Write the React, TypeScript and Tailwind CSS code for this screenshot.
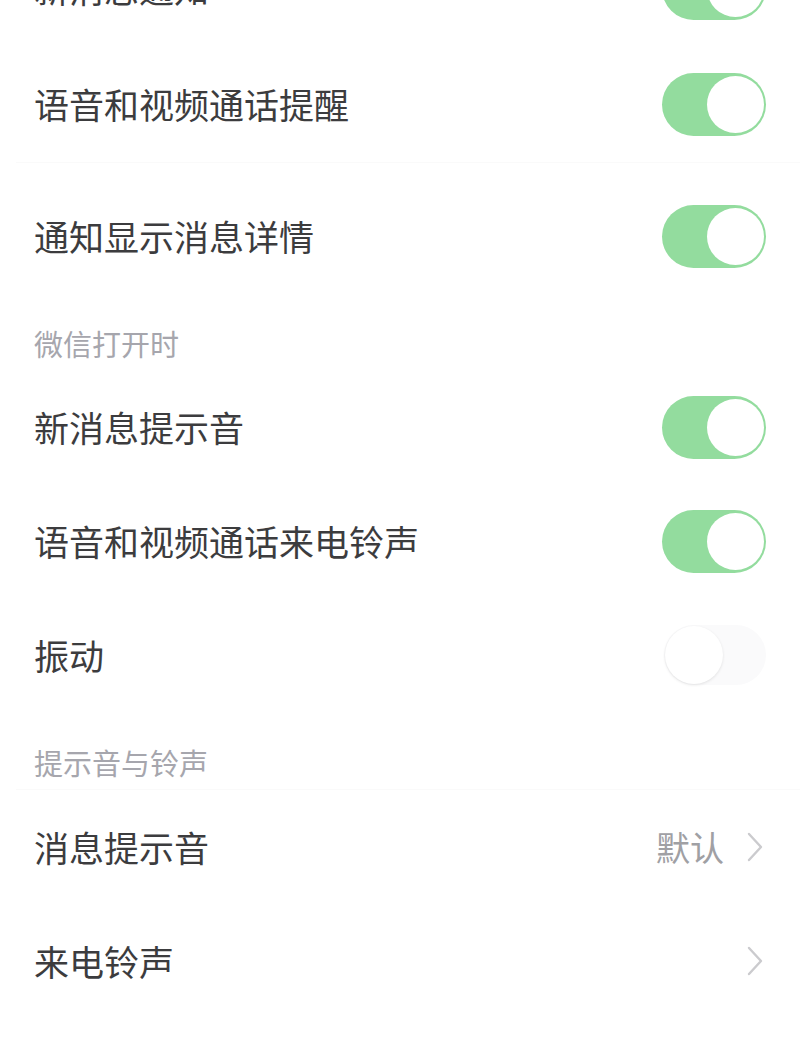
import React from "react";

const font = { fontFamily: '"Noto Sans CJK SC", "Noto Sans", sans-serif' };

function Toggle({ on }: { on: boolean }) {
  if (on) {
    return (
      <div className="relative h-[63px] w-[104px] rounded-full bg-[#93dc9e]">
        <div className="absolute right-[2px] top-[3px] h-[57px] w-[57px] rounded-full bg-white" />
      </div>
    );
  }
  return (
    <div className="relative h-[60px] w-[102px] rounded-full bg-[#fafafb]">
      <div className="absolute left-[1px] top-[1px] h-[58px] w-[58px] rounded-full bg-white shadow-[0_1px_3px_rgba(0,0,0,0.10)]" />
    </div>
  );
}

function Chevron() {
  return (
    <svg width="18" height="30" viewBox="0 0 18 30" fill="none">
      <path d="M3 2 L15 15 L3 28" stroke="#cbcbce" strokeWidth="2.4" strokeLinecap="round" strokeLinejoin="round" />
    </svg>
  );
}

function Row({ label, on, h = "h-[114px]" }: { label: string; on: boolean; h?: string }) {
  return (
    <div className={`flex ${h} items-center justify-between pl-[34px] pr-[34px]`}>
      <span className="text-[35px] leading-[40px] text-[#3c3c3e]">{label}</span>
      <Toggle on={on} />
    </div>
  );
}

function NavRow({ label, value }: { label: string; value?: string }) {
  return (
    <div className="flex h-[114px] items-center justify-between pl-[34px] pr-[36px]">
      <span className="text-[35px] leading-[40px] text-[#3c3c3e]">{label}</span>
      <div className="flex items-center gap-[22px]">
        {value && <span className="text-[34px] leading-[40px] text-[#a0a0a4]">{value}</span>}
        <Chevron />
      </div>
    </div>
  );
}

function Header({ label, pt, pb }: { label: string; pt: string; pb: string }) {
  return (
    <div className={`pl-[34px] ${pt} ${pb}`}>
      <div className="text-[29px] leading-[28px] text-[#a6a6ad]">{label}</div>
    </div>
  );
}

export default function App() {
  return (
    <div className="h-[1044px] w-[800px] overflow-hidden bg-white" style={font}>
      <div className="-mt-[70px]">
        <Row label="新消息通知" on={true} h="h-[116px]" />
        <Row label="语音和视频通话提醒" on={true} h="h-[116px]" />
        <div className="ml-[16px] h-px bg-[#fafafa]" />
        <div className="h-[15px]" />
        <Row label="通知显示消息详情" on={true} h="h-[116px]" />
        <Header label="微信打开时" pt="pt-[35px]" pb="pb-[13px]" />
        <Row label="新消息提示音" on={true} />
        <Row label="语音和视频通话来电铃声" on={true} />
        <Row label="振动" on={false} />
        <Header label="提示音与铃声" pt="pt-[36px]" pb="pb-[13px]" />
        <div className="ml-[16px] h-px bg-[#fafafa]" />
        <NavRow label="消息提示音" value="默认" />
        <NavRow label="来电铃声" />
      </div>
    </div>
  );
}
